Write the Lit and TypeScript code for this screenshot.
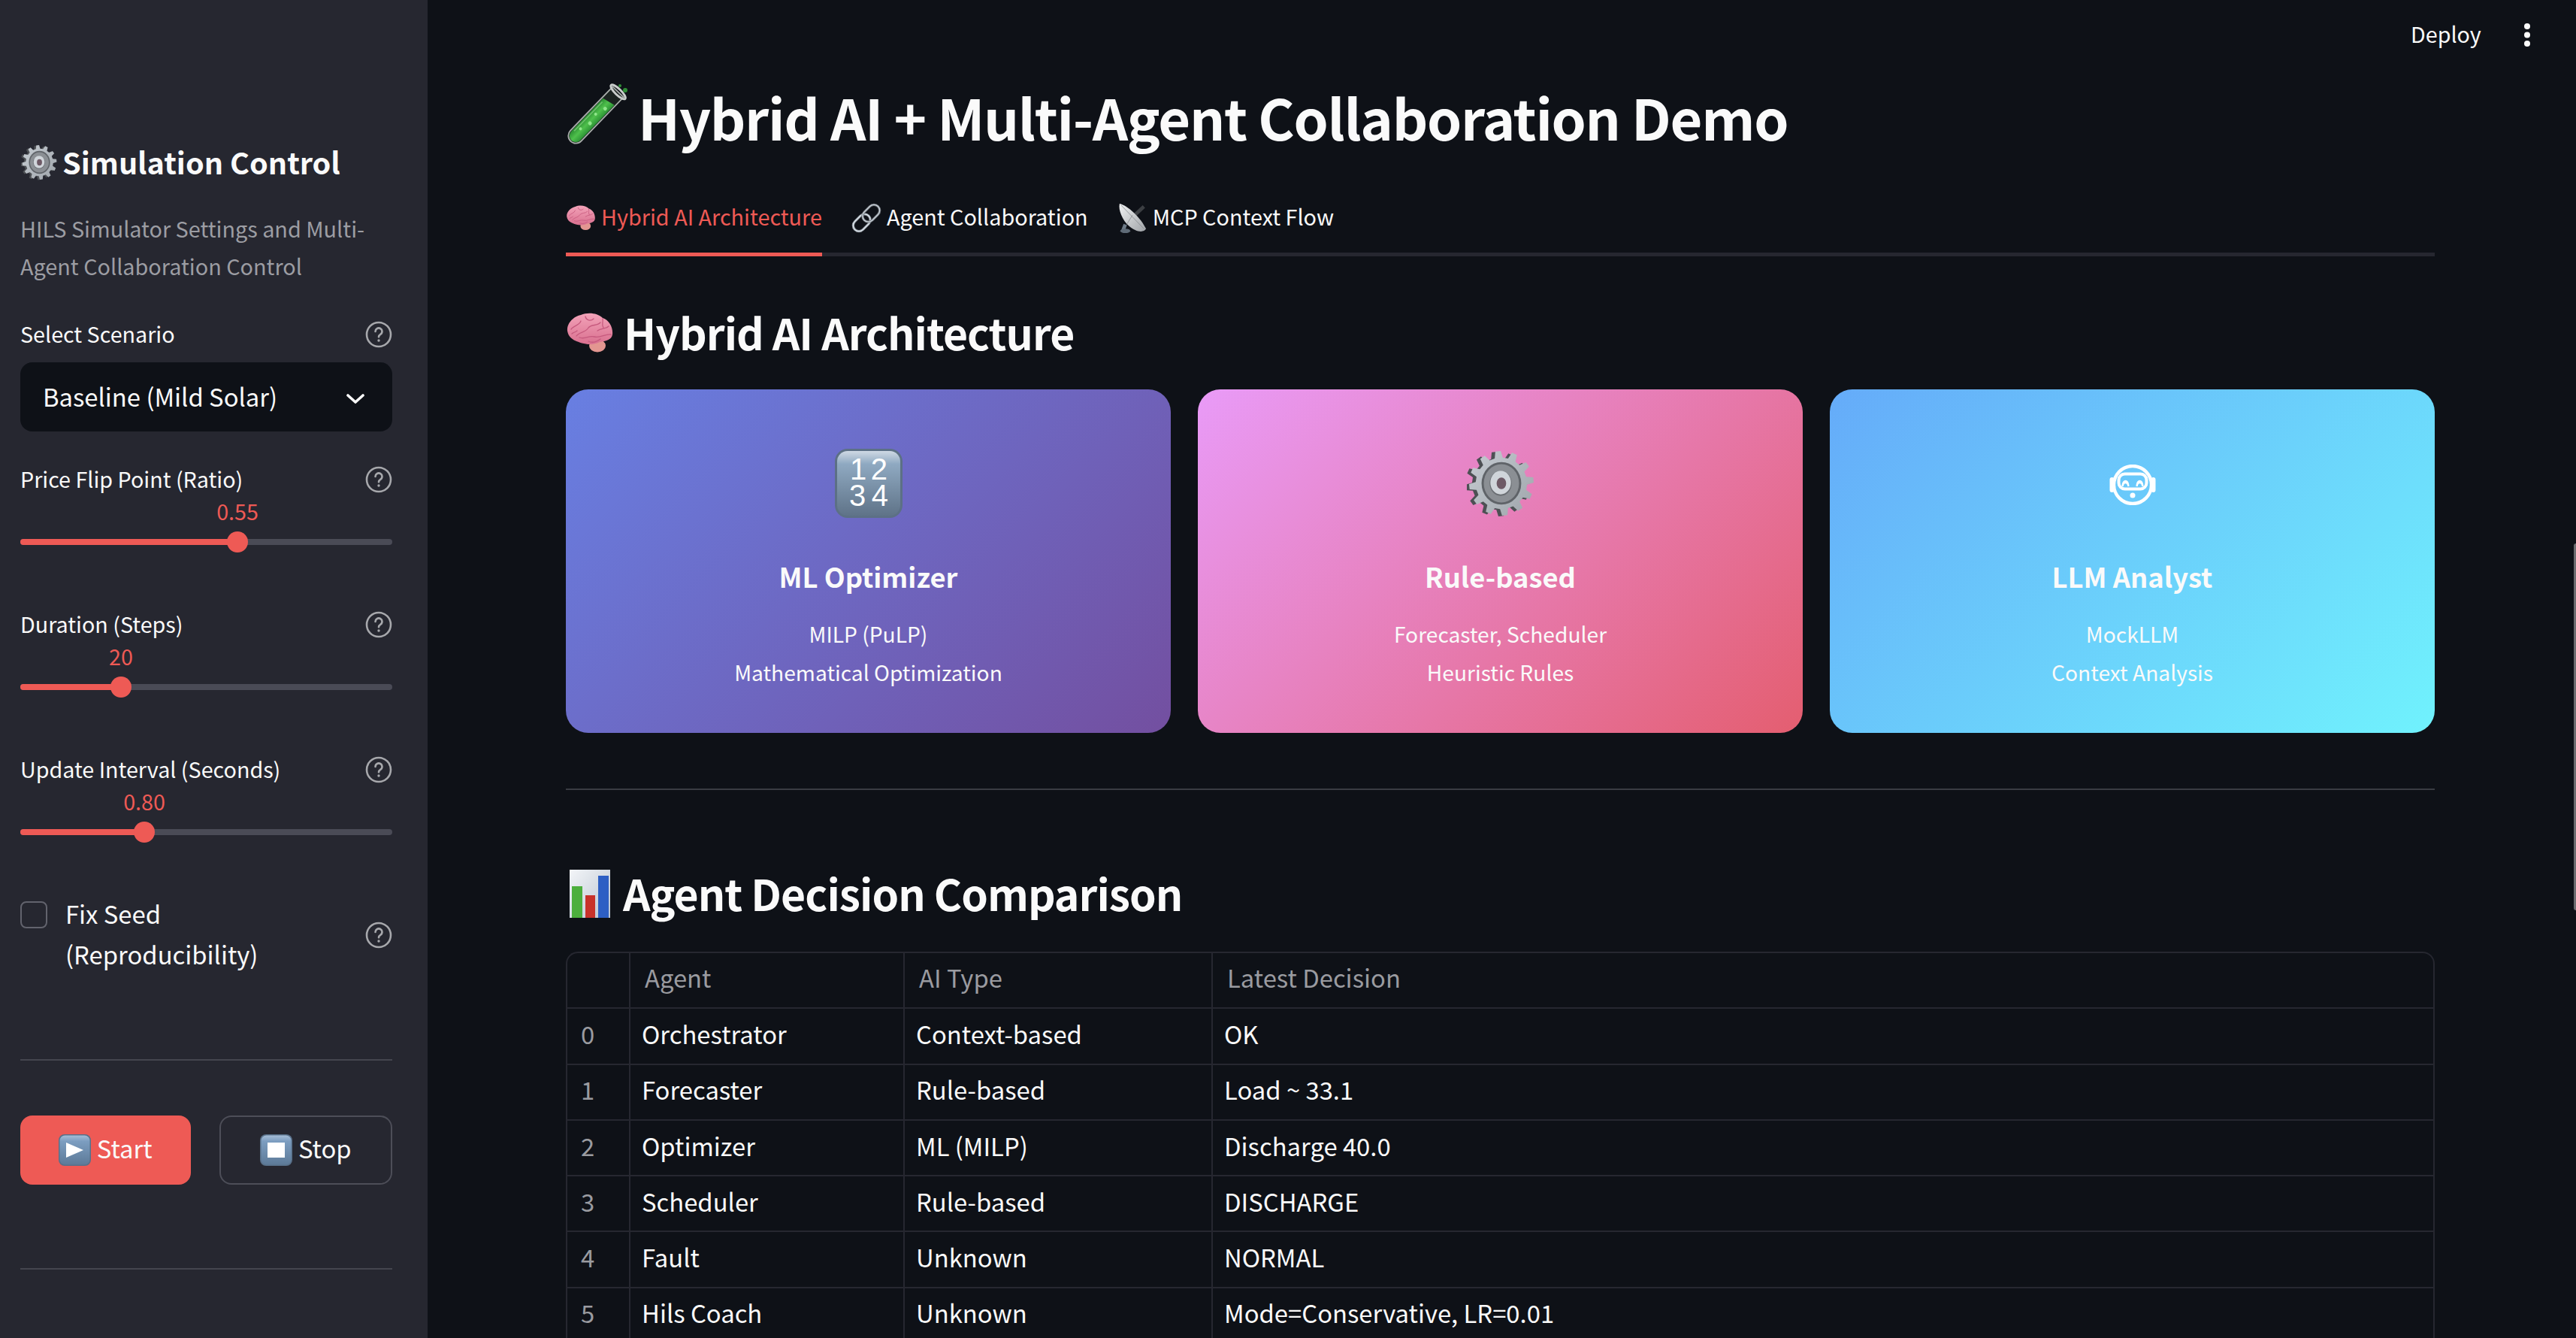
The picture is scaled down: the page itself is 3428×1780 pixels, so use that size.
import { LitElement, html, css, svg } from "lit";
import { customElement } from "lit/decorators.js";

const gearPath = (cx: number, cy: number, ro: number, ri: number, n: number) => {
  const pts: string[] = [];
  for (let i = 0; i < n; i++) {
    const a = (i / n) * Math.PI * 2 - Math.PI / 2;
    const s = (Math.PI * 2) / n;
    const p = (r: number, t: number) =>
      `${(cx + r * Math.cos(a + t * s)).toFixed(2)} ${(cy + r * Math.sin(a + t * s)).toFixed(2)}`;
    pts.push(`L${p(ri, -0.3)}`, `L${p(ro, -0.16)}`, `L${p(ro, 0.16)}`, `L${p(ri, 0.3)}`);
  }
  return "M" + pts.join(" ").slice(1) + "Z";
};

const gear = (cls: string) => html`<svg class=${cls} viewBox="0 0 92 92">
  <defs>
    <linearGradient id="gf" x1="0" y1="0" x2="1" y2="1"><stop offset="0" stop-color="#c6ccd2"/><stop offset="1" stop-color="#9fa5ab"/></linearGradient>
  </defs>
  <path d=${gearPath(44, 46, 44, 35, 12)} fill="#4d5054" transform="translate(-2 1) rotate(-6 44 46)"/>
  <path d=${gearPath(47, 46, 44, 35, 12)} fill="url(#gf)" transform="rotate(-6 47 46)"/>
  <ellipse cx="47" cy="46" rx="27" ry="29" fill="#5f6368"/>
  <ellipse cx="47" cy="46" rx="24" ry="26" fill="#8b8f94"/>
  <ellipse cx="46" cy="46" rx="15" ry="17" fill="#6a6e73"/>
  <ellipse cx="46" cy="45" rx="14" ry="16" fill="#d0d5da"/>
  <ellipse cx="47" cy="46" rx="6.5" ry="8" fill="#6e5a66"/>
</svg>`;

const brain = (cls: string) => html`<svg class=${cls} viewBox="0 0 64 54">
  <defs>
    <linearGradient id="bf" x1="0" y1="0" x2="0" y2="1"><stop offset="0" stop-color="#f3a3b9"/><stop offset="1" stop-color="#d9708f"/></linearGradient>
  </defs>
  <ellipse cx="42" cy="44" rx="11" ry="8.5" fill="#e39691"/>
  <path d="M2 24C1 14 10 5 20 3 29 -1 42 0 49 7 58 10 63 20 62 29 61 36 53 38 45 39 33 45 21 41 12 37 6 34 3 30 2 24Z" fill="url(#bf)"/>
  <g fill="none" stroke="#c65a7e" stroke-width="1.3" stroke-linecap="round">
    <path d="M7 22C12 16 18 17 20 11"/><path d="M14 31C18 25 26 27 30 20 34 15 42 18 46 13"/>
    <path d="M26 5C27 10 33 12 37 8"/><path d="M18 33C26 36 30 30 38 32 46 34 52 28 60 29"/>
    <path d="M42 24C47 20 53 22 57 18"/><path d="M8 28C10 26 13 26 15 24"/><path d="M30 38C36 41 42 38 46 35"/>
    <path d="M49 8C50 13 47 16 50 20"/>
  </g>
</svg>`;

const tube = html`<svg class="i-tube" viewBox="0 0 100 100">
  <defs>
    <linearGradient id="tg" x1="0" y1="0" x2="1" y2="0"><stop offset="0" stop-color="#2c8f33"/><stop offset=".5" stop-color="#4fc04c"/><stop offset="1" stop-color="#2c9435"/></linearGradient>
  </defs>
  <g transform="translate(47 46) rotate(44)">
    <path d="M-10 -44V37a10 10 0 0 0 20 0V-44Z" fill="#1b2320" stroke="#a9aeab" stroke-width="1.800"/>
    <path d="M-8.500 -24L8.500 -28V37a8.500 8.500 0 0 1 -17 0Z" fill="url(#tg)"/>
    <path d="M-6 -20V34" stroke="#a8e8a0" stroke-width="1.600" opacity=".5"/>
    <circle cx="3" cy="-16" r="2.500" fill="#8fe58a"/><circle cx="-1" cy="-2" r="2" fill="#8fe58a"/><circle cx="2" cy="12" r="2.500" fill="#8fe58a"/><circle cx="-2" cy="26" r="2" fill="#8fe58a"/>
    <ellipse cx="0" cy="-44" rx="13" ry="4" fill="none" stroke="#c9cdcb" stroke-width="3"/>
  </g>
  <circle cx="87" cy="12" r="3" fill="#2f8f36"/><circle cx="80" cy="6" r="2" fill="#2f8f36"/>
</svg>`;

const link = html`<svg class="i-tab" viewBox="3 3 34 34">
  <g fill="none" transform="rotate(-45 20 20)">
    <rect x="1.500" y="13.500" width="22" height="13" rx="6.500" stroke="#8d949b" stroke-width="2.800"/>
    <rect x="1.500" y="13.500" width="22" height="13" rx="6.500" stroke="#dfe8f0" stroke-width="1.200"/>
    <rect x="16.500" y="13.500" width="22" height="13" rx="6.500" stroke="#6f747a" stroke-width="2.800"/>
    <rect x="16.500" y="13.500" width="22" height="13" rx="6.500" stroke="#c9d2da" stroke-width="1.200"/>
  </g>
</svg>`;

const satellite = html`<svg class="i-tab" viewBox="0 0 40 42">
  <defs>
    <linearGradient id="sd" x1="0" y1="0" x2="1" y2="1"><stop offset="0" stop-color="#f1f2f3"/><stop offset="1" stop-color="#9fa3a7"/></linearGradient>
  </defs>
  <path d="M20 20L36 5" stroke="#3c3f43" stroke-width="5"/>
  <path d="M10 30L7 38" stroke="#6d7a87" stroke-width="5"/>
  <ellipse cx="10" cy="39" rx="7" ry="3" fill="#5f6b77"/>
  <path d="M2 1C13 3 32 21 39 36 36 42 25 41 15 32 6 24 0 10 2 1Z" fill="url(#sd)"/>
  <path d="M4 3L36 36M20 17L12 30" stroke="#85898d" stroke-width=".8"/>
</svg>`;

const numbers = html`<svg class="i-card" viewBox="0 0 90 92">
  <defs>
    <linearGradient id="ng" x1="0" y1="0" x2="0" y2="1"><stop offset="0" stop-color="#cfd9e4"/><stop offset=".2" stop-color="#8fa9c1"/><stop offset="1" stop-color="#5f7388"/></linearGradient>
  </defs>
  <rect x="0" y="0" width="90" height="92" rx="17" fill="#5c7085"/>
  <rect x="3" y="3" width="84" height="86" rx="14" fill="url(#ng)"/>
  <text class="kt" x="45" y="41" textLength="50">12</text>
  <text class="kt" x="45" y="76" textLength="52">34</text>
</svg>`;

const robot = html`<svg class="i-robot" viewBox="0 0 62 54">
  <ellipse cx="31" cy="27" rx="25" ry="25" fill="none" stroke="#fff" stroke-width="4.400"/>
  <rect x="0.500" y="17" width="6" height="20" rx="3" fill="#fff"/><rect x="55.500" y="17" width="6" height="20" rx="3" fill="#fff"/>
  <rect x="12.500" y="12.500" width="37" height="20" rx="8" fill="none" stroke="#fff" stroke-width="4"/>
  <path d="M16.500 29c0-11 10-11 10 0h-2.400c0-5-5.200-5-5.200 0ZM35.500 29c0-11 10-11 10 0h-2.400c0-5-5.200-5-5.200 0Z" fill="#fff"/>
  <circle cx="31" cy="41" r="3.500" fill="#fff"/>
</svg>`;

const chart = html`<svg class="i-chart" viewBox="0 0 54 64">
  <defs><linearGradient id="cb" x1="0" y1="0" x2="1" y2="1"><stop offset="0" stop-color="#f3f5f8"/><stop offset="1" stop-color="#b9c4d0"/></linearGradient></defs>
  <rect width="54" height="64" fill="url(#cb)"/>
  <rect x="3" y="22" width="14" height="42" fill="#4caf3d"/>
  <rect x="21" y="34" width="13" height="30" fill="#c8322a"/>
  <rect x="38" y="8" width="14" height="56" fill="#2d5fc4"/>
</svg>`;

const keycap = (inner: unknown) => html`<svg class="i-key" viewBox="0 0 43 42">
  <defs><linearGradient id="kg" x1="0" y1="0" x2="0" y2="1"><stop offset="0" stop-color="#a5bdd6"/><stop offset=".2" stop-color="#7c9dc0"/><stop offset="1" stop-color="#5d7a98"/></linearGradient></defs>
  <rect width="43" height="42" rx="8" fill="#587089"/><rect x="1.500" y="1.500" width="40" height="39" rx="7" fill="url(#kg)"/>${inner}
</svg>`;

const help = html`<svg class="help" viewBox="0 0 36 36" fill="none" stroke="#a7a8ac" stroke-width="2.600">
  <circle cx="18" cy="18" r="16"/>
  <path d="M13.500 14a4.500 4.500 0 1 1 7 3.700c-1.600 1.100-2.500 1.800-2.500 3.500" stroke-linecap="round"/>
  <circle cx="18" cy="26" r="1.700" fill="#a7a8ac" stroke="none"/>
</svg>`;

const sliders = [
  { label: "Price Flip Point (Ratio)", value: "0.55", x: 289 },
  { label: "Duration (Steps)", value: "20", x: 134 },
  { label: "Update Interval (Seconds)", value: "0.80", x: 165 },
];

const cards = [
  { cls: "c1", icon: numbers, title: "ML Optimizer", lines: ["MILP (PuLP)", "Mathematical Optimization"] },
  { cls: "c2", icon: gear("i-card"), title: "Rule-based", lines: ["Forecaster, Scheduler", "Heuristic Rules"] },
  { cls: "c3", icon: robot, title: "LLM Analyst", lines: ["MockLLM", "Context Analysis"] },
];

const rows = [
  ["0", "Orchestrator", "Context-based", "OK"],
  ["1", "Forecaster", "Rule-based", "Load ~ 33.1"],
  ["2", "Optimizer", "ML (MILP)", "Discharge 40.0"],
  ["3", "Scheduler", "Rule-based", "DISCHARGE"],
  ["4", "Fault", "Unknown", "NORMAL"],
  ["5", "Hils Coach", "Unknown", "Mode=Conservative, LR=0.01"],
];

@customElement("app-root")
export class AppRoot extends LitElement {
  static styles = css`
    :host { display: flex; height: 100vh; overflow: hidden; background: #0e1117; color: #fafafa; position: relative;
      font-family: "Noto Sans CJK SC", "Noto Sans", sans-serif; font-size: 32.800px; }
    svg { display: block; flex: none; }
    .side { flex: none; width: 569px; box-sizing: border-box; background: #262730; padding: 189px 47px 0 27px; }
    .side-h { display: flex; align-items: center; gap: 7px; height: 54px; font-size: 39.600px; font-weight: 700; white-space: nowrap; }
    .side-h span { margin-bottom: 4px; }
    .i-gear-s { width: 48px; height: 48px; margin-left: 1px; }
    .cap { margin-top: 36px; font-size: 28.800px; line-height: 50px; color: #9c9da3; }
    .lab { display: flex; justify-content: space-between; align-items: center; height: 40px; font-size: 28.700px; }
    .lab span { margin-bottom: 4px; }
    .help { width: 36px; height: 36px; }
    .lab-sel { margin-top: 46px; }
    .select { margin-top: 17px; height: 92px; border-radius: 16px; background: #0e1117; display: flex; align-items: center;
      justify-content: space-between; padding: 0 37px 0 30px; }
    .select span { margin-bottom: 4px; }
    .chev { width: 24px; height: 14px; margin-top: 6px; }
    .slider { margin-top: 76px; }
    .slider.first { margin-top: 44px; }
    .val { margin-top: 4px; height: 40px; line-height: 40px; font-size: 28.700px; color: #ee5a55; white-space: nowrap; }
    .val span { display: inline-block; transform: translate(-50%, -2px); }
    .track { position: relative; margin-top: 5px; height: 28px; }
    .rail { position: absolute; left: 0; right: 0; top: 10px; height: 8px; border-radius: 4px; background: #4a4b56; }
    .fill { position: absolute; left: 0; top: 10px; height: 8px; border-radius: 4px; background: #ee5a55; }
    .thumb { position: absolute; top: 0; width: 28px; height: 28px; margin-left: -14px; border-radius: 50%; background: #ee5a55; }
    .check { margin-top: 67px; display: flex; align-items: center; }
    .box { align-self: flex-start; margin-top: 11px; width: 36px; height: 36px; box-sizing: border-box; border: 2px solid #62636d; border-radius: 8px; }
    .check-t { flex: 1; margin: 0 0 4px 24px; line-height: 54px; }
    .rule-s { height: 2px; background: #44454e; }
    .r1 { margin-top: 109px; }
    .r2 { margin-top: 111px; }
    .btns { margin-top: 73px; display: flex; gap: 38px; }
    .btn { flex: 1; height: 92px; box-sizing: border-box; border-radius: 16px; display: flex; align-items: center; justify-content: center; gap: 8px; }
    .btn span { margin-bottom: 7px; }
    .btn.on { background: #ee5a55; }
    .btn.off { border: 2px solid #4d4e58; }
    .i-key { width: 43px; height: 42px; }
    .main { flex: 1; min-width: 0; box-sizing: border-box; padding: 103px 188px 0 184px; }
    h1 { margin: 0; display: flex; align-items: center; gap: 4px; height: 106px; font-size: 74px; letter-spacing: -1.350px; font-weight: 600; white-space: nowrap; }
    h1 span { margin-bottom: 4px; }
    .i-tube { width: 100px; height: 100px; margin-left: -8px; margin-top: 4px; }
    .tabs { margin-top: 42px; height: 85px; display: flex; gap: 39px; border-bottom: 5px solid #262730; }
    .tab { height: 77px; padding-bottom: 8px; box-sizing: content-box; margin-bottom: -5px; border-bottom: 5px solid transparent; display: flex; align-items: center; gap: 7px; font-size: 28.800px; }
    .tab span { margin-bottom: 4px; }
    .tab.on { color: #ee5a55; border-bottom-color: #ee5a55; }
    .i-tab { width: 40px; height: 40px; }
    h2 { margin: 0; display: flex; align-items: center; height: 77px; font-size: 57px; letter-spacing: -0.950px; font-weight: 600; white-space: nowrap; }
    h2 span { margin-bottom: 4px; }
    .h2a { margin-top: 63px; gap: 13px; }
    .i-brain-l { width: 64px; height: 54px; }
    .cards { margin-top: 37px; display: grid; grid-template-columns: repeat(3, 1fr); gap: 36px; }
    .card { height: 457px; box-sizing: border-box; border-radius: 30px; padding-top: 79px; display: flex; flex-direction: column; align-items: center; }
    .c1 { background: linear-gradient(135deg, #687fe2, #734fa0); }
    .c2 { background: linear-gradient(135deg, #e99bf8, #e45e70); }
    .c3 { background: linear-gradient(135deg, #65abf9, #70f2fd); }
    .ico { height: 92px; display: flex; align-items: center; justify-content: center; }
    .i-card { width: 90px; height: 92px; }
    .i-robot { width: 62px; height: 54px; margin-top: 4px; }
    .kt { font-family: "Liberation Sans", sans-serif; font-size: 40px; fill: #fff; text-anchor: middle; }
    .card-t { margin-top: 53px; font-size: 36.300px; font-weight: 700; line-height: 48px; }
    .card-l { font-size: 28.200px; line-height: 51px; }
    .lines { margin-top: 27px; text-align: center; }
    .rule { margin-top: 74px; height: 2px; background: #3a3c43; }
    .h2b { margin-top: 99px; gap: 17px; }
    .i-chart { width: 54px; height: 64px; margin-left: 5px; }
    .table { margin-top: 39px; border: 2px solid #262730; border-bottom: 0; border-radius: 16px 16px 0 0; }
    .tr { display: grid; grid-template-columns: 84px 365px 410px 1fr; height: 74.300px; box-sizing: border-box; border-bottom: 2px solid #262730; }
    .td { display: flex; align-items: center; padding: 0 0 8px 15px; border-right: 2px solid #262730; white-space: nowrap; }
    .td:last-child { border-right: 0; }
    .td:first-child { padding-left: 18px; color: #9a9ba0; }
    .head .td { color: #9a9ba0; padding: 0 0 10px 19px; }
    .deploy { position: absolute; top: 24px; left: 3208px; font-size: 28.700px; line-height: 42px; }
    .dots { position: absolute; left: 3359px; top: 31px; width: 8px; height: 31px; }
    .scroll { position: absolute; right: 0; top: 723px; width: 3px; height: 488px; border-radius: 3px 0 0 3px; background: #6c6d70; }
  `;

  render() {
    return html`
      <aside class="side">
        <div class="side-h">${gear("i-gear-s")}<span>Simulation Control</span></div>
        <div class="cap">HILS Simulator Settings and Multi-Agent Collaboration Control</div>
        <div class="lab lab-sel"><span>Select Scenario</span>${help}</div>
        <div class="select"><span>Baseline (Mild Solar)</span>
          <svg class="chev" viewBox="0 0 24 14" fill="none" stroke="#fafafa" stroke-width="3.600" stroke-linecap="round" stroke-linejoin="round"><path d="M2 2L12 11L22 2"/></svg>
        </div>
        ${sliders.map((s, i) => html`
          <div class="slider ${i === 0 ? "first" : ""}">
            <div class="lab"><span>${s.label}</span>${help}</div>
            <div class="val" style="padding-left:${s.x}px"><span>${s.value}</span></div>
            <div class="track">
              <div class="rail"></div>
              <div class="fill" style="width:${s.x}px"></div>
              <div class="thumb" style="left:${s.x}px"></div>
            </div>
          </div>`)}
        <div class="check"><div class="box"></div><div class="check-t">Fix Seed<br />(Reproducibility)</div>${help}</div>
        <div class="rule-s r1"></div>
        <div class="btns">
          <div class="btn on">${keycap(svg`<path d="M10 11L33 21L10 31Z" fill="#fff"/>`)}<span>Start</span></div>
          <div class="btn off">${keycap(svg`<rect x="10" y="11" width="23" height="20" fill="#fff"/>`)}<span>Stop</span></div>
        </div>
        <div class="rule-s r2"></div>
      </aside>
      <main class="main">
        <h1>${tube}<span>Hybrid AI + Multi-Agent Collaboration Demo</span></h1>
        <div class="tabs">
          <div class="tab on">${brain("i-tab")}<span>Hybrid AI Architecture</span></div>
          <div class="tab">${link}<span>Agent Collaboration</span></div>
          <div class="tab">${satellite}<span>MCP Context Flow</span></div>
        </div>
        <h2 class="h2a">${brain("i-brain-l")}<span>Hybrid AI Architecture</span></h2>
        <div class="cards">
          ${cards.map((c) => html`<div class="card ${c.cls}">
            <div class="ico">${c.icon}</div>
            <div class="card-t">${c.title}</div>
            <div class="lines">${c.lines.map((l) => html`<div class="card-l">${l}</div>`)}</div>
          </div>`)}
        </div>
        <div class="rule"></div>
        <h2 class="h2b">${chart}<span>Agent Decision Comparison</span></h2>
        <div class="table">
          <div class="tr head"><div class="td"></div><div class="td">Agent</div><div class="td">AI Type</div><div class="td">Latest Decision</div></div>
          ${rows.map((r) => html`<div class="tr">${r.map((c) => html`<div class="td">${c}</div>`)}</div>`)}
        </div>
      </main>
      <div class="deploy">Deploy</div>
      <svg class="dots" viewBox="0 0 8 31" fill="#fafafa"><circle cx="4" cy="4" r="4"/><circle cx="4" cy="15.500" r="4"/><circle cx="4" cy="27" r="4"/></svg>
      <div class="scroll"></div>
    `;
  }
}
